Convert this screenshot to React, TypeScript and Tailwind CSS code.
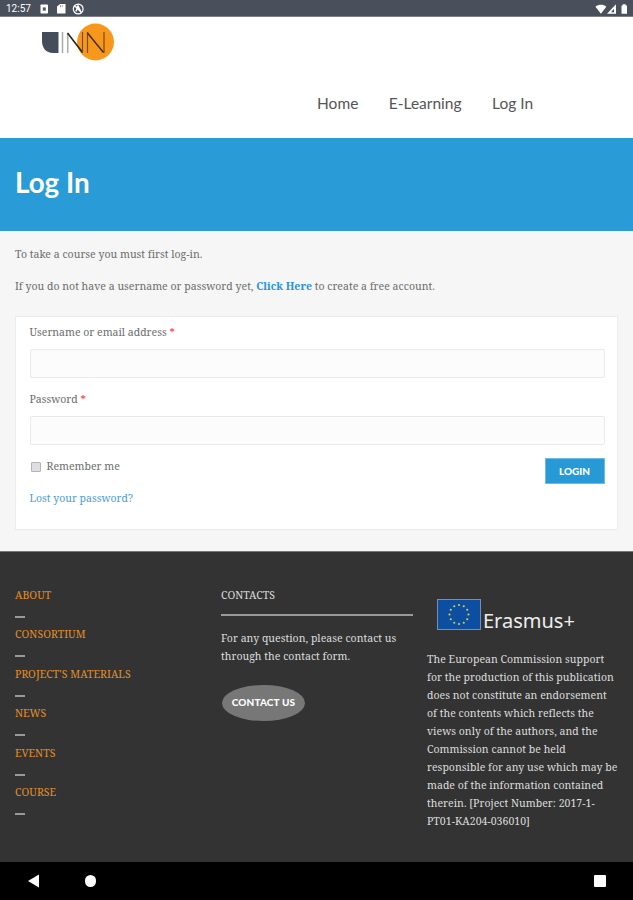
import React from 'react';

const navItems = ['Home', 'E-Learning', 'Log In'];

const footerLinks = ['ABOUT', 'CONSORTIUM', "PROJECT'S MATERIALS", 'NEWS', 'EVENTS', 'COURSE'];

const supportText = [
  'The European Commission support',
  'for the production of this publication',
  'does not constitute an endorsement',
  'of the contents which reflects the',
  'views only of the authors, and the',
  'Commission cannot be held',
  'responsible for any use which may be',
  'made of the information contained',
  'therein. [Project Number: 2017-1-',
  'PT01-KA204-036010]',
];

const StatusBar: React.FC = () => (
  <div className="flex h-[17px] items-center border-b border-[#7d8085] bg-[#4a505b] pl-[6px] pr-[4px] text-white">
    <span className="w-[34px] pt-[2px] font-['Roboto',sans-serif] text-[10px] leading-none">12:57</span>
    <svg className="mt-px" width="46" height="14" viewBox="0 0 46 14">
      <rect x="0.5" y="2.5" width="7.5" height="9" rx="0.8" fill="#fff" />
      <rect x="2.8" y="5.4" width="3" height="3.2" fill="#555b65" />
      <path d="M20 2h5.5v9.500h-8.500v-7z" fill="#fff" />
      <path d="M20.500 3.200v2M22.300 3.200v2" stroke="#777d85" strokeWidth="0.7" />
      <circle cx="38.200" cy="7" r="4.900" fill="none" stroke="#fff" strokeWidth="1.200" />
      <path d="M35 4l6.500 6.500M36 9.500l2-5.500 2.500 5" stroke="#fff" strokeWidth="1.500" fill="none" />
    </svg>
    <svg className="ml-auto mt-px" width="34" height="14" viewBox="0 0 34 14">
      <path d="M0.500 4.700C3.500 2.200 8.300 2.200 11.300 4.700L5.900 11.700z" fill="#fff" />
      <path d="M21 2.300v9.500h-9z" fill="#fff" />
      <path d="M19 6.800v3.500h-3" fill="#4a505b" />
      <path d="M26.500 3.500h1.200v-1.300h3v1.300h1.300v8.300h-5.500z" fill="#fff" />
    </svg>
  </div>
);

const Logo: React.FC = () => (
  <svg width="76" height="40" viewBox="0 0 76 40">
    <circle cx="55.500" cy="20" r="18.500" fill="#f7981d" />
    <path d="M2 10h16.500v21H13C6 31 2 26 2 19z" fill="#454d5b" />
    <path d="M22.500 10v21" stroke="#aaa" strokeWidth="1.500" />
    <path d="M27.800 31V11" stroke="#999" strokeWidth="1.200" />
    <path d="M27.500 11L42.500 30.500" stroke="#29231d" strokeWidth="1.600" />
    <path d="M42.500 31V10" stroke="#7a4c13" strokeWidth="1.100" />
    <path d="M47.500 31V10M64 31V10" fill="none" stroke="#7a4c13" strokeWidth="1.200" />
    <path d="M47.500 11L63.500 30.500" stroke="#3b2a17" strokeWidth="1.400" />
  </svg>
);

const Header: React.FC = () => (
  <header className="flex h-[121px] flex-col bg-white">
    <div className="pl-10 pt-[5px]">
      <Logo />
    </div>
    <nav className="mt-[31px] flex pl-[317px] font-['Lato',sans-serif] text-[15.5px] leading-5 text-[#555]">
      {navItems.map((item) => (
        <a key={item} className="mr-[30.5px] whitespace-nowrap">{item}</a>
      ))}
    </nav>
  </header>
);

const Field: React.FC<{ label: string; type: string }> = ({ label, type }) => (
  <div className="mb-[12px]">
    <label className="block h-[26px] leading-[18px]">
      {label} <span className="text-[#f22]">*</span>
    </label>
    <input type={type} className="block h-[29px] w-full rounded-[2px] border border-[#eaeaea] bg-[#fcfcfc] px-2 outline-none" />
  </div>
);

const LoginForm: React.FC = () => (
  <form className="mt-[21px] h-[214px] border border-[#ececec] bg-white pl-[13.5px] pr-[12.5px] pt-[6px]">
    <Field label="Username or email address" type="text" />
    <Field label="Password" type="password" />
    <div className="flex items-start justify-between">
      <label className="flex items-center leading-[18px]">
        <span className="ml-px mr-[6px] mt-[2px] h-[10px] w-[10px] rounded-[1px] border border-[#b5b5b5] bg-[#dedede]" />
        Remember me
      </label>
      <button type="button" className="mt-px h-[26px] w-[60px] border border-[#6dbbe6] bg-[#2799d6] font-['Lato',sans-serif] text-[10px] font-black leading-none text-white">
        LOGIN
      </button>
    </div>
    <a className="mt-[5px] block leading-[18px] text-[#4a9ddb]">Lost your password?</a>
  </form>
);

const EuFlag: React.FC = () => (
  <svg width="44" height="31" viewBox="0 0 44 31">
    <rect x="0.500" y="0.500" width="43" height="30" fill="#0b4ea2" stroke="#7b8ea9" />
    {Array.from({ length: 12 }, (_, i) => {
      const angle = (i * Math.PI) / 6;
      return <circle key={i} cx={22 + 9.5 * Math.sin(angle)} cy={15.5 - 9.5 * Math.cos(angle)} r="1.100" fill="#c9cc55" />;
    })}
  </svg>
);

const Footer: React.FC = () => (
  <footer className="flex h-[311px] border-t border-[#777] bg-[#333] pl-[15px] text-[#ddd]">
    <ul className="w-[206px] pt-[34px]">
      {footerLinks.map((link) => (
        <li key={link} className="h-[39.4px] text-[#e38e28]">
          <a className="block h-[30px] text-[10.5px] leading-[18px] tracking-[0.05px]">{link}</a>
          <div className="h-[2px] w-[10px] bg-[#999]" />
        </li>
      ))}
    </ul>

    <div className="w-[206px] pt-[34px]">
      <h3 className="text-[10.5px] leading-[18px]">CONTACTS</h3>
      <div className="mt-[10px] h-[1.5px] w-[192px] bg-[#999]" />
      <p className="mt-[13px] whitespace-nowrap leading-[18px] tracking-[0.03px]">
        For any question, please contact us
        <br />
        through the contact form.
      </p>
      <a className="ml-px mt-[20px] flex h-[36px] w-[83px] items-center justify-center rounded-[50%] bg-[#777] font-['Lato',sans-serif] text-[10px] font-black tracking-[0.15px] text-white">
        CONTACT US
      </a>
    </div>

    <div className="pt-[47px]">
      <div className="ml-[10px] flex">
        <EuFlag />
        <span className="ml-[2px] mt-[9px] font-['Noto_Sans',sans-serif] text-[20px] leading-[26px] text-[#eee]">Erasmus+</span>
      </div>
      <p className="mt-[16px] leading-[18px] tracking-[0.03px]">
        {supportText.map((line) => (
          <span key={line} className="block whitespace-nowrap">{line}</span>
        ))}
      </p>
    </div>
  </footer>
);

const NavigationBar: React.FC = () => (
  <div className="flex h-[38px] items-center bg-black pl-[28px] pr-[27px] text-white">
    <svg width="12" height="14" viewBox="0 0 12 14" fill="currentColor"><path d="M0 7L11 0.500v13z" /></svg>
    <div className="ml-[45px] h-[12px] w-[11px] rounded-full bg-white" />
    <div className="ml-auto h-[12px] w-[12px] rounded-[1px] bg-white" />
  </div>
);

const App: React.FC = () => {
  return (
    <div className="flex h-[900px] w-[633px] flex-col overflow-hidden bg-[#f6f6f6] font-['Noto_Serif','DejaVu_Serif_Condensed','DejaVu_Serif',serif] text-[10.5px] text-[#6c6c6c]">
      <StatusBar />
      <Header />
      <div className="flex h-[93px] items-center bg-[#299cd7] pb-[4px] pl-[15px]">
        <h1 className="font-['Lato',sans-serif] text-[27.8px] font-bold leading-none text-white">Log In</h1>
      </div>
      <main className="h-[320px] px-[15px] pt-[14px]">
        <p className="leading-[18px] tracking-[0.02px]">To take a course you must first log-in.</p>
        <p className="mt-[14px] leading-[18px] tracking-[0.02px]">
          If you do not have a username or password yet, <a className="font-bold text-[#2494dd]">Click Here</a> to create a free account.
        </p>
        <LoginForm />
      </main>
      <Footer />
      <NavigationBar />
    </div>
  );
};

export default App;
